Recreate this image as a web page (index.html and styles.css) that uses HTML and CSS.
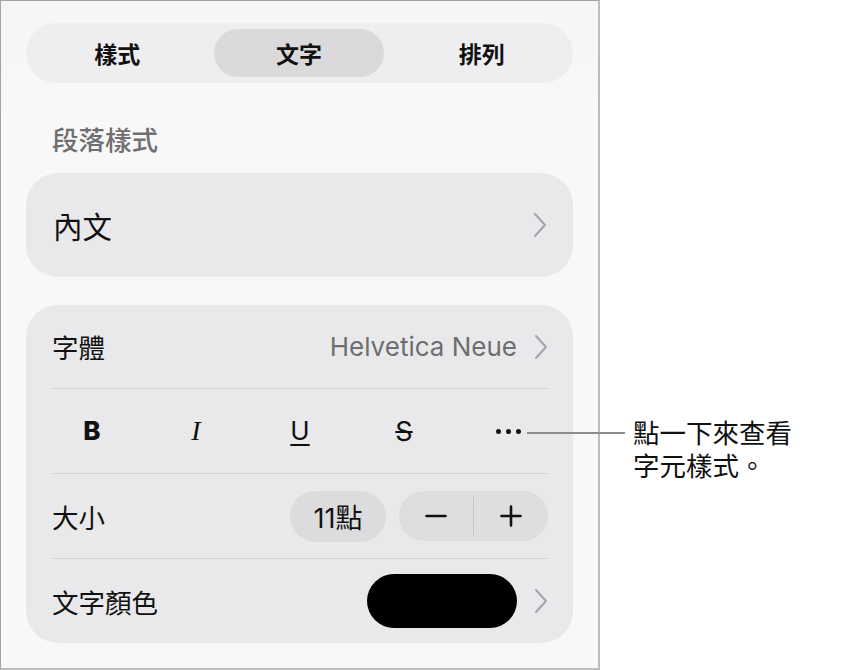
FILE: index.html
```html
<!DOCTYPE html>
<html lang="zh-Hant">
<head>
<meta charset="utf-8">
<link rel="stylesheet" href="styles.css">
</head>
<body>
<div class="page">
  <div class="panel">
    <div class="segmented">
      <div class="seg"><span class="seg-label">樣式</span></div>
      <div class="seg selected"><span class="seg-label">文字</span></div>
      <div class="seg"><span class="seg-label">排列</span></div>
    </div>
    <div class="heading">段落樣式</div>
    <div class="card card-style">
      <span class="style-name">內文</span>
      <svg class="chev" width="14" height="26" viewBox="0 0 14 26"><path d="M2 2 L12 13 L2 24" fill="none" stroke="#a3a3a8" stroke-width="2" stroke-linecap="round" stroke-linejoin="round"/></svg>
    </div>
    <div class="card card-font">
      <div class="row row-first">
        <span class="label">字體</span>
        <span class="right">
          <span class="value">Helvetica Neue</span>
          <svg class="chev" width="14" height="26" viewBox="0 0 14 26"><path d="M2 2 L12 13 L2 24" fill="none" stroke="#a3a3a8" stroke-width="2" stroke-linecap="round" stroke-linejoin="round"/></svg>
        </span>
      </div>
      <div class="row">
        <div class="fmt-grid">
          <span class="fmt fmt-b">B</span>
          <span class="fmt fmt-i">I</span>
          <span class="fmt fmt-u">U</span>
          <span class="fmt fmt-s">S</span>
          <span class="fmt fmt-more"><i class="dot"></i><i class="dot"></i><i class="dot"></i></span>
        </div>
      </div>
      <div class="row">
        <span class="label">大小</span>
        <span class="right size-controls">
          <span class="size-pill">11點</span>
          <span class="stepper">
            <span class="step">
              <svg width="22" height="22" viewBox="0 0 22 22"><path d="M1.5 11 H20.5" stroke="#111" stroke-width="2.6" stroke-linecap="round"/></svg>
            </span>
            <span class="step-divider"></span>
            <span class="step">
              <svg width="22" height="22" viewBox="0 0 22 22"><path d="M1.5 11 H20.5 M11 1.5 V20.5" stroke="#111" stroke-width="2.6" stroke-linecap="round"/></svg>
            </span>
          </span>
        </span>
      </div>
      <div class="row">
        <span class="label">文字顏色</span>
        <span class="right">
          <span class="swatch"></span>
          <svg class="chev" width="14" height="26" viewBox="0 0 14 26"><path d="M2 2 L12 13 L2 24" fill="none" stroke="#a3a3a8" stroke-width="2" stroke-linecap="round" stroke-linejoin="round"/></svg>
        </span>
      </div>
    </div>
  </div>
  <div class="callout">
    <span class="leader"></span>
    <div class="callout-text">
      <span class="callout-line">點一下來查看</span>
      <span class="callout-line">字元樣式。</span>
    </div>
  </div>
</div>
</body>
</html>
```

FILE: styles.css
```css
html, body {
  margin: 0;
  padding: 0;
  background: #ffffff;
}

body {
  font-family: "Inter", "Noto Sans CJK TC", sans-serif;
  color: #111111;
}

.page {
  display: flex;
  width: 862px;
  height: 670px;
  position: relative;
}

.panel {
  box-sizing: border-box;
  width: 600px;
  height: 670px;
  flex: none;
  background: linear-gradient(#f6f6f8 0, #f8f8f9 120px, #f8f8f8 100%);
  border-top: 1px solid #a4a4a4;
  border-left: 1px solid #a4a4a4;
  border-right: 2px solid #bdbdbd;
  border-bottom: 2px solid #bdbdbd;
  padding: 22px 25px 0 25px;
}

/* segmented control */
.segmented {
  display: grid;
  grid-template-columns: 1fr 1fr 1fr;
  height: 60px;
  border-radius: 30px;
  background: #eeeef0;
}

.seg {
  display: flex;
  align-items: center;
  justify-content: center;
  padding: 6px;
}

.seg.selected {
  padding: 6px 7px 6px 6px;
}

.seg.selected .seg-label {
  background: #dadadc;
}

.seg-label {
  flex: 1;
  align-self: stretch;
  display: flex;
  align-items: center;
  justify-content: center;
  border-radius: 24px;
  font-family: "Noto Sans CJK TC", sans-serif;
  font-weight: 700;
  font-size: 23px;
  color: #111111;
}

/* heading */
.heading {
  font-family: "Noto Sans CJK TC", sans-serif;
  font-weight: 500;
  font-size: 26.5px;
  line-height: 34px;
  color: #6f6f72;
  padding: 39px 0 17px 26px;
}

/* cards */
.card {
  background: #e9e9eb;
  border-radius: 32px;
}

.card-style {
  height: 104px;
  display: flex;
  align-items: center;
  justify-content: space-between;
  padding: 0 26px 0 27px;
  box-sizing: border-box;
  margin-bottom: 28px;
}

.style-name {
  font-family: "Noto Sans CJK TC", sans-serif;
  font-size: 29.5px;
  color: #111111;
}

.chev {
  display: block;
  flex: none;
}

.card-font {
  padding: 0 25px 0 26px;
  height: 338px;
  box-sizing: border-box;
}

.row {
  height: 84px;
  display: flex;
  align-items: center;
  justify-content: space-between;
  border-top: 1px solid #d3d3d5;
}

.row-first {
  height: 83px;
  border-top: none;
}

.label {
  font-family: "Noto Sans CJK TC", sans-serif;
  font-size: 26.5px;
  color: #111111;
}

.right {
  display: flex;
  align-items: center;
  gap: 17px;
}

.value {
  font-family: "Inter", sans-serif;
  font-size: 26px;
  color: #6e6e70;
}

/* format row */
.fmt-grid {
  display: grid;
  grid-template-columns: repeat(5, 104px);
  align-items: center;
  justify-items: center;
  margin-left: -12px;
}

.fmt {
  font-size: 26px;
  color: #111111;
  line-height: 1;
}

.fmt-b {
  font-family: "Inter", sans-serif;
  font-weight: 800;
}

.fmt-i {
  font-family: "Liberation Serif", serif;
  font-style: italic;
  font-size: 28px;
}

.fmt-u {
  font-family: "Inter", sans-serif;
  font-weight: 400;
  text-decoration: underline;
  text-decoration-thickness: 2px;
  text-underline-offset: 4px;
}

.fmt-s {
  font-family: "Inter", sans-serif;
  font-weight: 400;
  font-size: 27px;
  text-decoration: line-through;
  text-decoration-thickness: 2px;
}

.fmt-more {
  display: flex;
  gap: 5px;
}

.dot {
  display: block;
  width: 5px;
  height: 5px;
  border-radius: 50%;
  background: #111111;
}

/* size row */
.size-controls {
  gap: 13px;
}

.size-pill {
  width: 96px;
  height: 51px;
  border-radius: 26px;
  background: #dcdcde;
  display: flex;
  align-items: center;
  justify-content: center;
  font-family: "Inter", "Noto Sans CJK TC", sans-serif;
  font-size: 27px;
  color: #111111;
}

.stepper {
  width: 149px;
  height: 50px;
  border-radius: 25px;
  background: #dededf;
  display: flex;
  align-items: center;
}

.step {
  flex: 1;
  display: flex;
  align-items: center;
  justify-content: center;
}

.step svg {
  display: block;
}

.step-divider {
  width: 1px;
  height: 38px;
  background: #c6c6c8;
}

.swatch {
  display: block;
  width: 150px;
  height: 54px;
  border-radius: 27px;
  background: #000000;
}

/* callout */
.callout {
  flex: 1;
  padding-left: 33px;
}

.leader {
  position: absolute;
  left: 527px;
  top: 432px;
  width: 98px;
  height: 2px;
  background: #8c8c8c;
}

.callout-text {
  padding-top: 415px;
  font-family: "Noto Sans CJK TC", sans-serif;
  font-size: 26.5px;
  color: #111111;
}

.callout-line {
  display: block;
  height: 33px;
  line-height: 33px;
}
```
